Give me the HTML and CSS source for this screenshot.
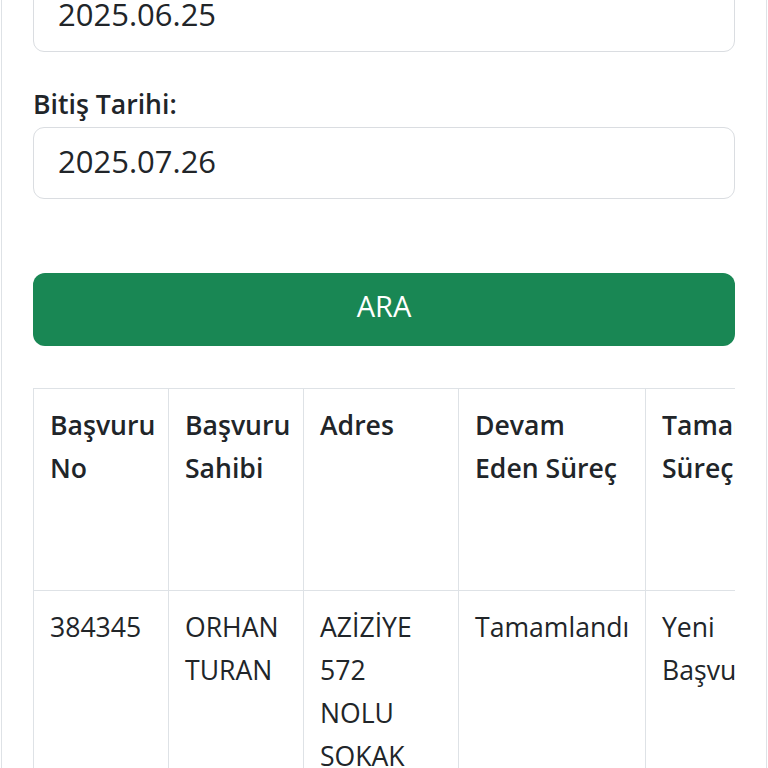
FILE: index.html
```html
<!DOCTYPE html>
<html lang="tr">
<head>
<meta charset="utf-8">
<title>Başvuru Sorgulama</title>
<link rel="stylesheet" href="styles.css">
</head>
<body>
<div class="card">
  <div class="field first">
    <label class="label">Başlangıç Tarihi:</label>
    <div class="input">2025.06.25</div>
  </div>
  <div class="field">
    <label class="label">Bitiş Tarihi:</label>
    <div class="input">2025.07.26</div>
  </div>
  <button class="btn">ARA</button>
  <div class="table-wrap">
    <table class="table">
      <colgroup>
        <col class="c1"><col class="c2"><col class="c3"><col class="c4"><col class="c5"><col class="c6"><col class="c7">
      </colgroup>
      <thead>
        <tr>
          <th>Başvuru No</th>
          <th>Başvuru Sahibi</th>
          <th>Adres</th>
          <th>Devam Eden Süreç</th>
          <th>Tamamlanan Süreçler</th>
          <th>Başvuru Tarihi</th>
          <th>İşlem</th>
        </tr>
      </thead>
      <tbody>
        <tr>
          <td>384345</td>
          <td>ORHAN TURAN</td>
          <td>AZİZİYE 572 NOLU SOKAK NO:8 ÇANKAYA/ ANKARA</td>
          <td>Tamamlandı</td>
          <td>Yeni Başvuru</td>
          <td>2025.07.01</td>
          <td>Detay</td>
        </tr>
      </tbody>
    </table>
  </div>
</div>
</body>
</html>
```
FILE: styles.css
```css
html, body {
  margin: 0;
  padding: 0;
  background: #ffffff;
}
body {
  font-family: "Open Sans", "Noto Sans", "DejaVu Sans", sans-serif;
  color: #212529;
  font-size: 26.6px;
  line-height: 42.7px;
  overflow: hidden;
}
.card {
  margin: -64px 1px 0 1px;
  border-left: 1px solid #dee2e6;
  border-right: 1px solid #dee2e6;
  padding: 0 31px 40px 31px;
  display: flex;
  flex-direction: column;
}
.field {
  display: flex;
  flex-direction: column;
  margin-top: 31px;
}
.field.first {
  margin-top: 0;
}
.label {
  font-weight: 600;
  margin-bottom: 1px;
}
.input {
  border: 1px solid #dadde1;
  border-radius: 11px;
  padding: 9px 24px 13.5px 24px;
  font-size: 31px;
  line-height: 48px;
  color: #212529;
}
.btn {
  margin-top: 74px;
  height: 73px;
  border: 0;
  border-radius: 12px;
  background: #198754;
  color: #ffffff;
  font-family: inherit;
  font-size: 29px;
  line-height: 43.5px;
  padding: 11px 0 18.5px 0;
}
.table-wrap {
  margin-top: 42px;
  overflow: hidden;
  width: 702px;
}
.table {
  border-collapse: collapse;
  table-layout: fixed;
  width: 1172px;
}
.c1 { width: 135px; }
.c2 { width: 135px; }
.c3 { width: 155px; }
.c4 { width: 187px; }
.c5 { width: 180px; }
.c6 { width: 180px; }
.c7 { width: 200px; }
.table th,
.table td {
  border: 1px solid #dee2e6;
  padding: 15px 17px 15px 16px;
  text-align: left;
  vertical-align: top;
}
.table thead tr {
  height: 202px;
}
.table th {
  font-weight: 600;
}
.table td {
  font-weight: 400;
}
```
